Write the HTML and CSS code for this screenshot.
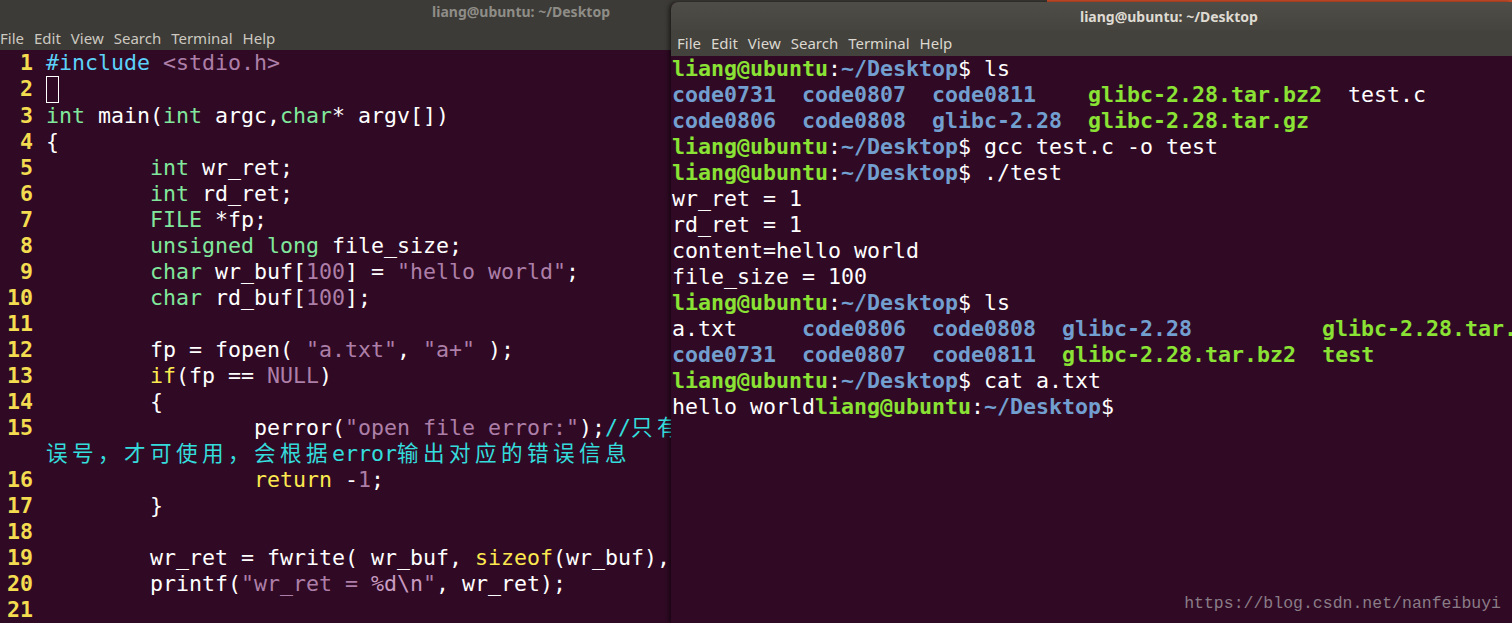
FILE: index.html
```html
<!DOCTYPE html>
<html lang="zh-CN">
<head>
  <meta charset="UTF-8">
  <title>liang@ubuntu: ~/Desktop</title>
  <link rel="stylesheet" href="styles.css">
</head>
<body>
  <div class="desktop">
    <div class="win win-back">
      <div class="titlebar"><span class="title">liang@ubuntu: ~/Desktop</span></div>
      <div class="menubar">
        <span>File</span><span>Edit</span><span>View</span><span>Search</span><span>Terminal</span><span>Help</span>
      </div>
<pre class="term vim"><span class="ln">  1 </span><span class="pp">#include</span> <span class="str">&lt;stdio.h&gt;</span>
<span class="ln">  2 </span><span class="cur"></span>
<span class="ln">  3 </span><span class="ty">int</span> main(<span class="ty">int</span> argc,<span class="ty">char</span>* argv[])
<span class="ln">  4 </span>{
<span class="ln">  5 </span>        <span class="ty">int</span> wr_ret;
<span class="ln">  6 </span>        <span class="ty">int</span> rd_ret;
<span class="ln">  7 </span>        <span class="ty">FILE</span> *fp;
<span class="ln">  8 </span>        <span class="ty">unsigned</span> <span class="ty">long</span> file_size;
<span class="ln">  9 </span>        <span class="ty">char</span> wr_buf[<span class="str">100</span>] = <span class="str">"hello world"</span>;
<span class="ln"> 10 </span>        <span class="ty">char</span> rd_buf[<span class="str">100</span>];
<span class="ln"> 11 </span>
<span class="ln"> 12 </span>        fp = fopen( <span class="str">"a.txt"</span>, <span class="str">"a+"</span> );
<span class="ln"> 13 </span>        <span class="st">if</span>(fp == <span class="str">NULL</span>)
<span class="ln"> 14 </span>        {
<span class="ln"> 15 </span>                perror(<span class="str">"open file error:"</span>);<span class="cm">//<span class="cjk">只有设置了错</span></span>
    <span class="cm"><span class="cjk">误号，才可使用，会根据</span>error<span class="cjk">输出对应的错误信息</span></span>
<span class="ln"> 16 </span>                <span class="st">return</span> -<span class="str">1</span>;
<span class="ln"> 17 </span>        }
<span class="ln"> 18 </span>
<span class="ln"> 19 </span>        wr_ret = fwrite( wr_buf, <span class="st">sizeof</span>(wr_buf), <span class="str">1</span>, fp );
<span class="ln"> 20 </span>        printf(<span class="str">"wr_ret = </span><span class="sp">%d\n</span><span class="str">"</span>, wr_ret);
<span class="ln"> 21 </span>
</pre>
    </div>

    <div class="win win-front">
      <div class="titlebar"><span class="title">liang@ubuntu: ~/Desktop</span></div>
      <div class="menubar">
        <span>File</span><span>Edit</span><span>View</span><span>Search</span><span>Terminal</span><span>Help</span>
      </div>
<pre class="term shell"><span class="pg">liang@ubuntu</span>:<span class="pb">~/Desktop</span>$ ls
<span class="b">code0731</span>  <span class="b">code0807</span>  <span class="b">code0811</span>    <span class="g">glibc-2.28.tar.bz2</span>  test.c
<span class="b">code0806</span>  <span class="b">code0808</span>  <span class="b">glibc-2.28</span>  <span class="g">glibc-2.28.tar.gz</span>
<span class="pg">liang@ubuntu</span>:<span class="pb">~/Desktop</span>$ gcc test.c -o test
<span class="pg">liang@ubuntu</span>:<span class="pb">~/Desktop</span>$ ./test
wr_ret = 1
rd_ret = 1
content=hello world
file_size = 100
<span class="pg">liang@ubuntu</span>:<span class="pb">~/Desktop</span>$ ls
a.txt     <span class="b">code0806</span>  <span class="b">code0808</span>  <span class="b">glibc-2.28</span>          <span class="g">glibc-2.28.tar.gz</span>
<span class="b">code0731</span>  <span class="b">code0807</span>  <span class="b">code0811</span>  <span class="g">glibc-2.28.tar.bz2</span>  <span class="g">test</span>
<span class="pg">liang@ubuntu</span>:<span class="pb">~/Desktop</span>$ cat a.txt
hello world<span class="pg">liang@ubuntu</span>:<span class="pb">~/Desktop</span>$
</pre>
    </div>

    <div class="watermark">https://blog.csdn.net/nanfeibuyi</div>
  </div>
</body>
</html>
```

FILE: styles.css
```css
body {
  margin: 0;
  padding: 0;
  background: #3c3b37;
  overflow: hidden;
}

.desktop {
  position: relative;
  display: flex;
  align-items: flex-start;
  width: 1512px;
  height: 623px;
  overflow: hidden;
}

/* thin orange edge of a window further back */
.desktop::before {
  content: "";
  position: absolute;
  top: 0;
  left: 1047px;
  right: 0;
  height: 2px;
  background: #d2502a;
}

.win {
  display: flex;
  flex-direction: column;
  background: #300a24;
  overflow: hidden;
}

.win-back {
  width: 671px;
  flex-shrink: 0;
  height: 623px;
}

.win-front {
  flex: 1;
  height: 621px;
  margin-top: 2px;
  border-radius: 7px 0 0 0;
  box-shadow: -2px 0 4px rgba(0, 0, 0, 0.55);
  position: relative;
  z-index: 1;
}

.titlebar {
  display: flex;
  align-items: center;
  font-family: "Noto Sans", "Open Sans", sans-serif;
  font-weight: bold;
  font-size: 14px;
}

.win-back .titlebar {
  height: 22px;
  padding-bottom: 4px;
  justify-content: flex-end;
  padding-right: 61px;
  background: #3c3b37;
  color: #8f8d87;
}

.win-front .titlebar {
  height: 28px;
  padding-left: 409px;
  background: linear-gradient(#4e4d48, #45443f);
  color: #dfdbd2;
}

.menubar {
  display: flex;
  align-items: center;
  gap: 10px;
  font-family: "Noto Sans", "Open Sans", sans-serif;
  font-size: 15px;
}

.win-back .menubar {
  height: 24px;
  padding-left: 0;
  background: #3c3b37;
  color: #cdc9c1;
}

.win-front .menubar {
  height: 26px;
  padding-left: 6px;
  background: #43423d;
  color: #dcd8cf;
}

.term {
  margin: 0;
  font-family: "DejaVu Sans Mono", "Noto Sans CJK SC", monospace;
  font-size: 21.6px;
  line-height: 26px;
  color: #ffffff;
  white-space: pre;
  overflow: hidden;
  flex: 1;
}

.vim {
  margin-left: -6px;
}

.shell {
  padding-left: 1px;
}

/* vim colours */
.ln { color: #f4dc50; font-weight: bold; }
.pp { color: #5cd2fa; }
.str { color: #ad7fa8; }
.sp { color: #c99cc2; }
.ty { color: #80e79c; }
.st { color: #fce94f; }
.cm { color: #34dcdc; }

.cjk {
  font-family: "Noto Sans CJK SC", sans-serif;
  letter-spacing: 4.4px;
  line-height: 0;
}

.cur {
  display: inline-block;
  width: 13px;
  height: 27px;
  border: 1px solid #ffffff;
  box-sizing: border-box;
  vertical-align: top;
}

/* shell colours */
.pg, .g { color: #8ae234; font-weight: bold; }
.pb, .b { color: #729fcf; font-weight: bold; }

.watermark {
  position: absolute;
  right: 11px;
  bottom: 10px;
  z-index: 2;
  font-family: "Liberation Mono", monospace;
  font-size: 16.5px;
  color: #8a7c87;
}
```
